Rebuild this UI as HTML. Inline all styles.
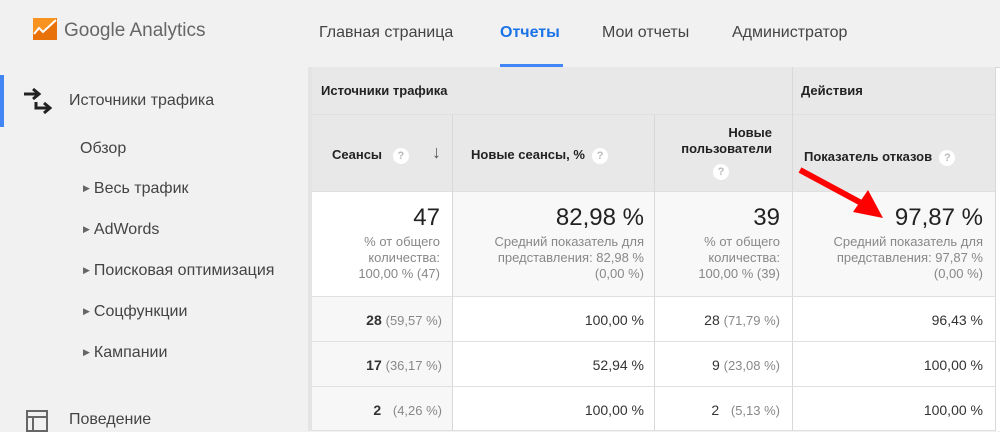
<!DOCTYPE html><html><head><meta charset="utf-8"><style>
*{margin:0;padding:0;box-sizing:border-box}
body{width:1000px;height:431px;overflow:hidden;background:#f1f1f1;font-family:"Liberation Sans",Arial,sans-serif;color:#333;position:relative}
.a{position:absolute;white-space:nowrap}
.nav{font-size:16px;color:#444;top:24px}
.sb{font-size:16px;color:#444}
.tri{font-size:9px;color:#666;margin-right:4px;vertical-align:2px}
.cell{position:absolute;border-right:1px solid #d8d8d8;border-bottom:1px solid #e0e0e0}
.h{font-weight:bold;font-size:13px;color:#222}
.q{display:inline-block;width:16px;height:16px;border-radius:50%;background:#fff;color:#bbb;font-size:11px;text-align:center;line-height:16px;font-weight:bold;vertical-align:middle}
.big{font-size:24px;color:#222;text-align:right}
.sub{font-size:13px;color:#888;text-align:right;line-height:16px}
.r{text-align:right;font-size:14px;color:#333}
.g{color:#888;font-size:13px}
</style></head><body>
<svg class="a" style="left:33px;left:33px;top:18px" width="24" height="22" viewBox="0 0 24 22"><rect width="24" height="22" fill="#f7931e"/><path d="M0 22V15L6 9L10 13L24 0V22Z" fill="#e8710a"/><path d="M1 16L6 10L10 14L23 2" stroke="#fff" stroke-width="2" fill="none"/></svg>
<div class="a" style="left:64px;top:20px;font-size:19px;color:#666">Google Analytics</div>
<div class="a nav" style="left:319px">Главная страница</div>
<div class="a nav" style="left:500px;color:#1a73e8;font-weight:bold">Отчеты</div>
<div class="a" style="left:500px;top:64px;width:63px;height:3px;background:#4285f4"></div>
<div class="a nav" style="left:602px">Мои отчеты</div>
<div class="a nav" style="left:732px">Администратор</div>
<div class="a" style="left:0;top:75px;width:4px;height:52px;background:#4285f4"></div>
<svg class="a" style="left:22px;top:87px" width="30" height="28" viewBox="0 0 30 28"><path d="M2 7H16M11 2L17 7L11 12" stroke="#222" stroke-width="3" fill="none"/><path d="M14 15V21H27M22 16L28 21L22 26" stroke="#222" stroke-width="3" fill="none"/></svg>
<div class="a sb" style="left:69px;top:92px">Источники трафика</div>
<div class="a sb" style="left:80px;top:140px">Обзор</div>
<div class="a sb" style="left:83px;top:180px"><span class="tri">▶</span>Весь трафик</div>
<div class="a sb" style="left:83px;top:221px"><span class="tri">▶</span>AdWords</div>
<div class="a sb" style="left:83px;top:262px"><span class="tri">▶</span>Поисковая оптимизация</div>
<div class="a sb" style="left:83px;top:303px"><span class="tri">▶</span>Соцфункции</div>
<div class="a sb" style="left:83px;top:344px"><span class="tri">▶</span>Кампании</div>
<svg class="a" style="left:26px;top:410px" width="22" height="22"><rect x="1" y="1" width="20" height="20" fill="none" stroke="#666" stroke-width="2"/><path d="M1 7H21M7 7V21" stroke="#666" stroke-width="2"/></svg>
<div class="a sb" style="left:69px;top:411px">Поведение</div>
<div class="a" style="left:308px;top:67px;width:4px;height:364px;background:#e4e4e4"></div>
<div class="a" style="left:312px;top:67px;width:688px;height:364px;background:#fff;border-top:1px solid #d8d8d8"></div>
<div class="cell" style="left:312px;top:67px;width:481px;height:48px;background:#e8e8e8"><div class="a h" style="left:9px;top:16px">Источники трафика</div></div>
<div class="cell" style="left:793px;top:67px;width:203px;height:48px;background:#e8e8e8"><div class="a h" style="left:8px;top:16px">Действия</div></div>
<div class="cell" style="left:312px;top:115px;width:141px;height:77px;background:#e8e8e8"><div class="a h" style="left:20px;top:32px">Сеансы &nbsp;&nbsp;<span class="q">?</span></div><div class="a" style="left:120px;top:27px;font-size:18px;color:#555;font-weight:bold">↓</div></div>
<div class="cell" style="left:453px;top:115px;width:202px;height:77px;background:#e8e8e8"><div class="a h" style="left:18px;top:32px">Новые сеансы, % &nbsp;<span class="q">?</span></div></div>
<div class="cell" style="left:655px;top:115px;width:138px;height:77px;background:#e8e8e8"><div class="a h" style="right:20px;top:10px;text-align:right;line-height:16px">Новые<br>пользователи</div><div class="a" style="left:58px;top:48px"><span class="q">?</span></div></div>
<div class="cell" style="left:793px;top:115px;width:203px;height:77px;background:#e8e8e8"><div class="a h" style="left:11px;top:34px">Показатель отказов &nbsp;<span class="q">?</span></div></div>
<div class="cell" style="left:312px;top:192px;width:141px;height:105px;background:#fff"><div class="a big" style="right:12px;top:12px">47</div><div class="a sub" style="right:12px;top:42px">% от общего<br>количества:<br>100,00 % (47)</div></div>
<div class="cell" style="left:453px;top:192px;width:202px;height:105px;background:#f8f8f8"><div class="a big" style="right:10px;top:12px">82,98 %</div><div class="a sub" style="right:10px;top:42px">Средний показатель для<br>представления: 82,98 %<br>(0,00 %)</div></div>
<div class="cell" style="left:655px;top:192px;width:138px;height:105px;background:#f8f8f8"><div class="a big" style="right:12px;top:12px">39</div><div class="a sub" style="right:12px;top:42px">% от общего<br>количества:<br>100,00 % (39)</div></div>
<div class="cell" style="left:793px;top:192px;width:203px;height:105px;background:#f8f8f8"><div class="a big" style="right:12px;top:12px">97,87 %</div><div class="a sub" style="right:12px;top:42px">Средний показатель для<br>представления: 97,87 %<br>(0,00 %)</div></div>
<div class="cell" style="left:312px;top:297px;width:141px;height:45px;background:#f7f7f7"><div class="a r" style="right:10px;top:15px"><b>28</b> <span class="g">(59,57 %)</span></div></div>
<div class="cell" style="left:453px;top:297px;width:202px;height:45px"><div class="a r" style="right:10px;top:15px">100,00 %</div></div>
<div class="cell" style="left:655px;top:297px;width:138px;height:45px"><div class="a r" style="right:12px;top:15px">28 <span class="g">(71,79 %)</span></div></div>
<div class="cell" style="left:793px;top:297px;width:203px;height:45px"><div class="a r" style="right:12px;top:15px">96,43 %</div></div>
<div class="cell" style="left:312px;top:342px;width:141px;height:45px;background:#f7f7f7"><div class="a r" style="right:10px;top:15px"><b>17</b> <span class="g">(36,17 %)</span></div></div>
<div class="cell" style="left:453px;top:342px;width:202px;height:45px"><div class="a r" style="right:10px;top:15px">52,94 %</div></div>
<div class="cell" style="left:655px;top:342px;width:138px;height:45px"><div class="a r" style="right:12px;top:15px">9 <span class="g">(23,08 %)</span></div></div>
<div class="cell" style="left:793px;top:342px;width:203px;height:45px"><div class="a r" style="right:12px;top:15px">100,00 %</div></div>
<div class="cell" style="left:312px;top:387px;width:141px;height:44px;background:#f7f7f7"><div class="a r" style="right:10px;top:15px"><b>2</b> &nbsp;&nbsp;<span class="g">(4,26 %)</span></div></div>
<div class="cell" style="left:453px;top:387px;width:202px;height:44px"><div class="a r" style="right:10px;top:15px">100,00 %</div></div>
<div class="cell" style="left:655px;top:387px;width:138px;height:44px"><div class="a r" style="right:12px;top:15px">2 &nbsp;&nbsp;<span class="g">(5,13 %)</span></div></div>
<div class="cell" style="left:793px;top:387px;width:203px;height:44px"><div class="a r" style="right:12px;top:15px">100,00 %</div></div>
<svg class="a" style="left:795px;top:165px" width="95" height="60"><path d="M5 5L70 40" stroke="#f00" stroke-width="6"/><path d="M88 53L58 47L73 25Z" fill="#f00"/></svg>
</body></html>
